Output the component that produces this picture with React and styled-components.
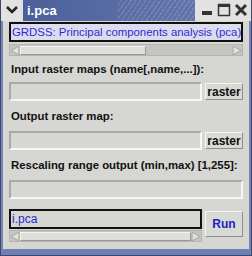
import React from "react";
import styled, { createGlobalStyle } from "styled-components";

const Global = createGlobalStyle`
  html, body { margin: 0; padding: 0; background: #d6d6d2; }
  * { box-sizing: border-box; }
`;

const Window = styled.div`
  width: 252px;
  height: 256px;
  display: flex;
  flex-direction: column;
  background: #d6d6d2;
  border: 1px solid #3c4770;
  border-top: none;
  font-family: "Liberation Sans", Arial, sans-serif;
  overflow: hidden;
`;

const TitleBar = styled.div`
  height: 21px;
  display: flex;
  align-items: center;
  background: #d6d6d2;
  border-bottom: 1px solid #8a92b0;
`;

const MenuBtn = styled.div`
  width: 22px;
  height: 21px;
  display: flex;
  align-items: center;
  justify-content: center;
  background: #e2e2e0;
`;

const Caption = styled.div`
  flex: 1;
  height: 21px;
  display: flex;
  align-items: center;
  padding-left: 4px;
  color: #fff;
  font-weight: bold;
  font-size: 13px;
  background:
    repeating-linear-gradient(-55deg, rgba(255,255,255,0.16) 0 1px, transparent 1px 4px) right / 45% 100% no-repeat,
    linear-gradient(90deg, #4b5f9a, #5a6da5 60%, #6274aa);
`;

const Controls = styled.div`
  display: flex;
  gap: 1px;
  padding: 0 2px 0 4px;
  height: 21px;
  align-items: center;
  background: #e2e2e0;
`;

const Ctl = styled.div`
  width: 16px;
  height: 16px;
  display: flex;
  align-items: center;
  justify-content: center;
`;

const Body = styled.div`
  flex: 1;
  display: flex;
  flex-direction: column;
  padding: 1px 6px 0 6px;
  border-left: 2px solid #7784b4;
  border-right: 2px solid #7784b4;
  border-bottom: 6px solid #6f7fb6;
`;

const Banner = styled.div`
  height: 20px;
  border: 2px solid #111;
  background: #dcdcee;
  color: #2b2bd0;
  font-size: 11.4px;
  line-height: 16px;
  padding-left: 1px;
  white-space: nowrap;
  overflow: hidden;
`;

const HScroll = styled.div`
  height: 12px;
  display: flex;
  align-items: center;
  background: #c4c4c0;
  border: 1px solid #b4b4b0;
  margin-top: ${(p) => p.$top || 2}px;
`;

const Arrow = styled.div`
  width: 10px;
  height: 10px;
  display: flex;
  align-items: center;
  justify-content: center;
`;

const Thumb = styled.div`
  height: 9px;
  width: ${(p) => p.$w}px;
  background: #dededb;
  border: 1px solid #f4f4f2;
  border-right-color: #9a9a96;
  border-bottom-color: #9a9a96;
`;

const Gap = styled.div`
  flex: 1;
`;

const Label = styled.div`
  font-size: 11.4px;
  font-weight: bold;
  color: #111;
  height: ${(p) => p.$h || 26}px;
  display: flex;
  align-items: center;
  padding-left: 2px;
  white-space: nowrap;
`;

const Row = styled.div`
  display: flex;
  gap: 3px;
  align-items: ${(p) => p.$align || "center"};
  margin-top: ${(p) => p.$top || 0}px;
`;

const Entry = styled.div`
  flex: 1;
  height: 19px;
  background: #d6d6d2;
  border: 2px solid;
  border-color: #a8a8a4 #f6f6f4 #f6f6f4 #a8a8a4;
`;

const Button = styled.div`
  width: 38px;
  height: ${(p) => p.$h || 17}px;
  margin-top: ${(p) => p.$top || 0}px;
  display: flex;
  align-items: center;
  justify-content: center;
  font-size: 12px;
  font-weight: bold;
  color: ${(p) => p.$color || "#111"};
  background: #d9d9d5;
  border: 1px solid;
  border-color: #f6f6f4 #8e8e8a #8e8e8a #f6f6f4;
`;

const Status = styled.div`
  height: 20px;
  border: 2px solid #111;
  background: #d6d6d2;
  color: #2b2bd0;
  font-size: 12px;
  line-height: 16px;
  padding-left: 1px;
`;

const Left = styled.div`
  flex: 1;
  display: flex;
  flex-direction: column;
`;

const LeftArrow = () => (
  <svg width="10" height="9" viewBox="0 0 10 9">
    <polygon points="9,0 9,9 1,4.5" fill="#e0e0dc" stroke="#a4a4a0" />
  </svg>
);
const RightArrow = () => (
  <svg width="10" height="9" viewBox="0 0 10 9">
    <polygon points="1,0 1,9 9,4.5" fill="#e0e0dc" stroke="#a4a4a0" />
  </svg>
);

const Scroll = ({ w, top }) => (
  <HScroll $top={top}>
    <Arrow>
      <LeftArrow />
    </Arrow>
    <Thumb $w={w} />
    <Gap />
    <Arrow>
      <RightArrow />
    </Arrow>
  </HScroll>
);

export default function App() {
  return (
    <>
      <Global />
      <Window>
        <TitleBar>
          <MenuBtn>
            <svg width="12" height="10" viewBox="0 0 12 10">
              <path d="M1 2 L6 7 L11 2" fill="none" stroke="#222" strokeWidth="2.6" />
            </svg>
          </MenuBtn>
          <Caption>i.pca</Caption>
          <Controls>
            <Ctl>
              <svg width="12" height="12" viewBox="0 0 12 12">
                <rect x="1" y="7" width="10" height="4" fill="#333" />
              </svg>
            </Ctl>
            <Ctl>
              <svg width="14" height="14" viewBox="0 0 14 14">
                <rect x="1.5" y="1.5" width="11" height="11" fill="none" stroke="#333" strokeWidth="1.5" />
                <rect x="1" y="1" width="12" height="3" fill="#333" />
              </svg>
            </Ctl>
            <Ctl>
              <svg width="14" height="14" viewBox="0 0 14 14">
                <path d="M2 2 L12 12 M12 2 L2 12" stroke="#333" strokeWidth="3" />
              </svg>
            </Ctl>
          </Controls>
        </TitleBar>
        <Body>
          <Banner>GRDSS: Principal components analysis (pca)</Banner>
          <Scroll w={126} top={2} />
          <Label>Input raster maps (name[,name,...]):</Label>
          <Row>
            <Entry />
            <Button>raster</Button>
          </Row>
          <Label $h={30}>Output raster map:</Label>
          <Row>
            <Entry />
            <Button>raster</Button>
          </Row>
          <Label $h={30}>Rescaling range output (min,max) [1,255]:</Label>
          <Row>
            <Entry />
          </Row>
          <Row $align="flex-start" $top={10}>
            <Left>
              <Status>i.pca</Status>
              <Scroll w={171} top={1} />
            </Left>
            <Button $h={26} $top={2} $color="#1c22c8">
              Run
            </Button>
          </Row>
        </Body>
      </Window>
    </>
  );
}
